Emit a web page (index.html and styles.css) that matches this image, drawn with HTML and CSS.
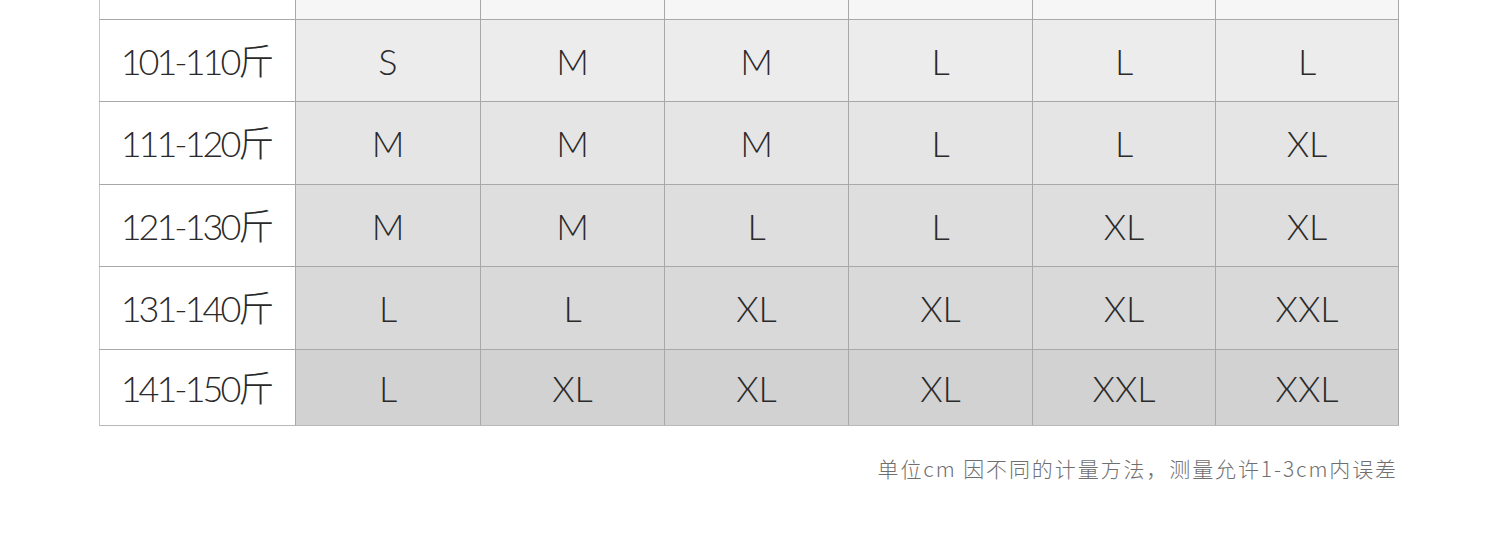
FILE: index.html
```html
<!DOCTYPE html>
<html lang="zh">
<head>
<meta charset="utf-8">
<title>尺码表</title>
<link rel="stylesheet" href="styles.css">
</head>
<body>
<div class="page">
  <table class="size-table">
    <colgroup>
      <col class="c-label"><col class="c-185"><col class="c-184"><col class="c-184"><col class="c-184"><col class="c-183"><col class="c-183">
    </colgroup>
    <tbody>
      <tr class="r0"><td class="label"></td><td></td><td></td><td></td><td></td><td></td><td></td></tr>
      <tr class="r1"><td class="label">101-110斤</td><td>S</td><td>M</td><td>M</td><td>L</td><td>L</td><td>L</td></tr>
      <tr class="r2"><td class="label">111-120斤</td><td>M</td><td>M</td><td>M</td><td>L</td><td>L</td><td>XL</td></tr>
      <tr class="r3"><td class="label">121-130斤</td><td>M</td><td>M</td><td>L</td><td>L</td><td>XL</td><td>XL</td></tr>
      <tr class="r4"><td class="label">131-140斤</td><td>L</td><td>L</td><td>XL</td><td>XL</td><td>XL</td><td>XXL</td></tr>
      <tr class="r5"><td class="label">141-150斤</td><td>L</td><td>XL</td><td>XL</td><td>XL</td><td>XXL</td><td>XXL</td></tr>
    </tbody>
  </table>
  <p class="note">单位cm 因不同的计量方法，测量允许1-3cm内误差</p>
</div>
</body>
</html>
```
FILE: styles.css
```css
html, body {
  margin: 0;
  padding: 0;
  background: #fff;
}
.page {
  width: 1500px;
  height: 544px;
  padding-left: 99px;
  box-sizing: border-box;
  overflow: hidden;
}
.size-table {
  border-collapse: collapse;
  table-layout: fixed;
  width: 1300px;
  font-family: Lato, "Noto Sans CJK SC", sans-serif;
  font-weight: 300;
  color: #2a2a2a;
}
.c-label { width: 196px; }
.c-185 { width: 185px; }
.c-184 { width: 184px; }
.c-183 { width: 183px; }
.size-table td {
  border: 1px solid #a8a8a8;
  text-align: center;
  vertical-align: middle;
  padding: 0;
  font-size: 36px;
  line-height: 1;
}
.size-table td.label {
  background: #fff;
  border-left-color: #c8c8c8;
  letter-spacing: -3px;
  padding-right: 3px;
}
.r0 td { border-top: none; height: 19px; background: #f6f6f6; }
.r1 td { height: 81px; background: #ececec; }
.r2 td { height: 82px; background: #e5e5e5; }
.r3 td { height: 81px; background: #dedede; }
.r4 td { height: 82px; background: #d9d9d9; }
.r5 td { height: 75px; background: #d2d2d2; border-bottom-color: #b8b8b8; }
.note {
  margin: 30px 0 0;
  width: 1299px;
  text-align: right;
  font-family: "Noto Sans CJK SC", "Noto Sans", sans-serif;
  font-weight: 300;
  font-size: 21px;
  letter-spacing: 1.9px;
  color: #6f6f6f;
  line-height: 24px;
}
```
